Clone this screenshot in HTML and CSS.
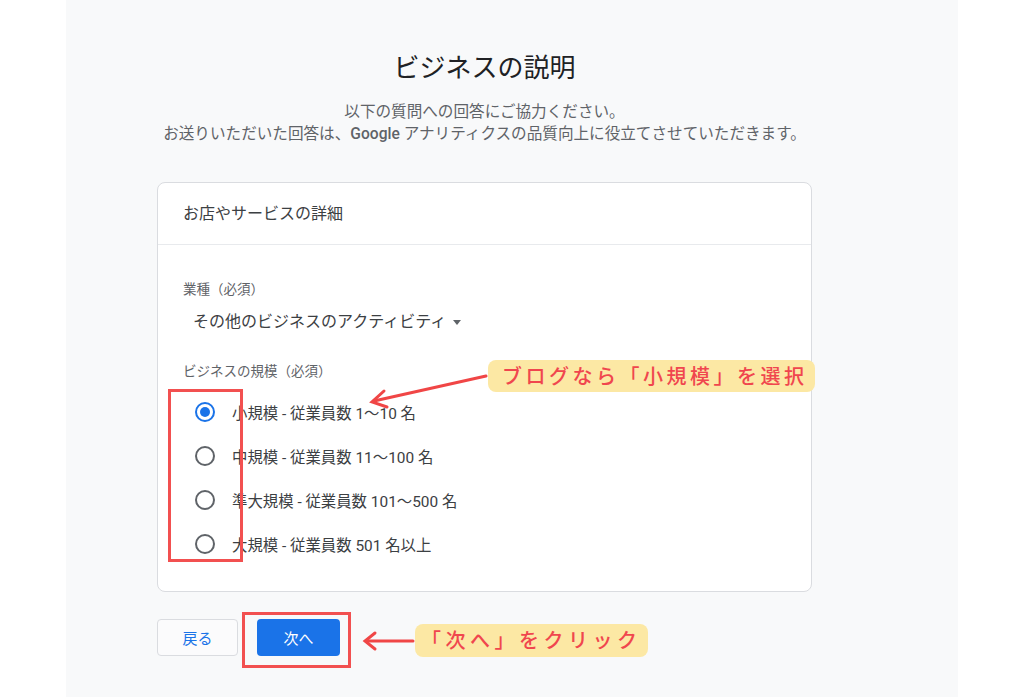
FILE: index.html
```html
<!DOCTYPE html>
<html lang="ja">
<head>
    <meta charset="UTF-8">
    <meta name="viewport" content="width=device-width, initial-scale=1.0">
    <title>ビジネスの説明</title>
    <link rel="stylesheet" href="styles.css">
</head>
<body>
    <div class="page">
        <div class="content">
            <h1 class="title">ビジネスの説明</h1>
            <p class="subtitle">以下の質問への回答にご協力ください。<br>お送りいただいた回答は、<b>Google</b> アナリティクスの品質向上に役立てさせていただきます。</p>

            <div class="card">
                <div class="card-header">お店やサービスの詳細</div>
                <div class="card-body">
                    <div class="field-label">業種（必須）</div>
                    <div class="dropdown">
                        その他のビジネスのアクティビティ
                        <svg class="caret" width="8" height="5" viewBox="0 0 8 5"><path d="M0 0h8L4 5z" fill="#5f6368"/></svg>
                    </div>

                    <div class="field-label size-label">ビジネスの規模（必須）</div>
                    <div class="radio-list">
                        <label class="radio-row"><span class="radio checked"></span>小規模 - 従業員数 1〜10 名</label>
                        <label class="radio-row"><span class="radio"></span>中規模 - 従業員数 11〜100 名</label>
                        <label class="radio-row"><span class="radio"></span>準大規模 - 従業員数 101〜500 名</label>
                        <label class="radio-row"><span class="radio"></span>大規模 - 従業員数 501 名以上</label>
                    </div>
                </div>
            </div>

            <div class="actions">
                <button class="btn btn-back">戻る</button>
                <button class="btn btn-next">次へ</button>
            </div>
        </div>
    </div>

    <!-- 注釈 -->
    <div class="notes">
        <div class="mark mark-radios"></div>
        <div class="mark mark-next"></div>
        <div class="pill pill-size">ブログなら「小規模」を選択</div>
        <div class="pill pill-next">「次へ」をクリック</div>
        <svg class="arrows" width="1024" height="697" viewBox="0 0 1024 697">
            <g stroke="#f04646" stroke-width="3" stroke-linecap="round" fill="none">
                <path d="M486 376 L374 401"/>
                <path d="M384 391 L372 402 L387 407"/>
                <path d="M413 641 L366 641"/>
                <path d="M375 633 L365 641 L375 649"/>
            </g>
        </svg>
    </div>
</body>
</html>
```

FILE: styles.css
```css
body {
    margin: 0;
    padding: 0;
    background-color: #ffffff;
    font-family: Roboto, "Noto Sans CJK JP", sans-serif;
    color: #3c4043;
    position: relative;
}
.page {
    width: 892px;
    min-height: 697px;
    margin: 0 auto;
    background-color: #f8f9fa;
    padding-left: 91px;
    box-sizing: border-box;
    overflow: hidden;
}
.content {
    width: 655px;
    padding-top: 52px;
}
.title {
    margin: 0;
    font-size: 26px;
    line-height: 32px;
    font-weight: 400;
    color: #202124;
    text-align: center;
}
.subtitle {
    margin: 17px 0 0;
    font-size: 15.6px;
    line-height: 22px;
    color: #5f6368;
    text-align: center;
    white-space: nowrap;
}
.subtitle b {
    font-weight: 500;
}
.card {
    margin-top: 37px;
    background-color: #ffffff;
    border: 1px solid #dadce0;
    border-radius: 8px;
}
.card-header {
    height: 61px;
    line-height: 61px;
    padding-left: 25px;
    font-size: 16px;
    color: #3c4043;
    border-bottom: 1px solid #e8eaed;
}
.card-body {
    padding: 35px 25px 25px;
}
.field-label {
    font-size: 13.5px;
    line-height: 18px;
    color: #5f6368;
}
.dropdown {
    display: flex;
    align-items: center;
    gap: 7px;
    margin: 12px 0 0 10px;
    font-size: 16px;
    line-height: 24px;
    color: #3c4043;
}
.size-label {
    margin-top: 28px;
}
.radio-list {
    margin-top: 10px;
    margin-left: 12px;
}
.radio-row {
    display: flex;
    align-items: center;
    gap: 17px;
    height: 44px;
    font-size: 15.4px;
    color: #3c4043;
}
.radio {
    flex: none;
    width: 20px;
    height: 20px;
    box-sizing: border-box;
    border: 2px solid #5f6368;
    border-radius: 50%;
    display: flex;
    align-items: center;
    justify-content: center;
}
.radio.checked {
    border-color: #1a73e8;
}
.radio.checked::after {
    content: "";
    width: 10px;
    height: 10px;
    border-radius: 50%;
    background-color: #1a73e8;
}
.actions {
    display: flex;
    gap: 19px;
    margin-top: 27px;
}
.btn {
    height: 37px;
    border-radius: 4px;
    font-family: inherit;
    font-size: 15px;
    cursor: pointer;
}
.btn-back {
    width: 81px;
    background-color: #fbfbfc;
    color: #1a73e8;
    border: 1px solid #dadce0;
}
.btn-next {
    width: 83px;
    background-color: #1a73e8;
    color: #ffffff;
    border: none;
}

/* 注釈レイヤー */
.notes {
    position: absolute;
    top: 0;
    left: 0;
    width: 1024px;
    height: 697px;
    pointer-events: none;
}
.arrows {
    position: absolute;
    top: 0;
    left: 0;
}
.mark {
    position: absolute;
    border: 3px solid #f25050;
    box-sizing: border-box;
}
.mark-radios {
    left: 168px;
    top: 389px;
    width: 75px;
    height: 173px;
}
.mark-next {
    left: 242px;
    top: 612px;
    width: 109px;
    height: 56px;
}
.pill {
    position: absolute;
    background-color: #fce8a4;
    color: #f0464e;
    border-radius: 8px;
    font-family: "Noto Sans CJK JP", sans-serif;
    font-weight: 500;
    font-size: 20px;
    letter-spacing: 3.5px;
    line-height: 32px;
    padding-left: 14px;
    box-sizing: border-box;
}
.pill-size {
    left: 488px;
    top: 360px;
    width: 327px;
    height: 32px;
}
.pill-next {
    left: 415px;
    top: 624px;
    width: 233px;
    height: 33px;
    padding-left: 6px;
    letter-spacing: 4.5px;
}
```
